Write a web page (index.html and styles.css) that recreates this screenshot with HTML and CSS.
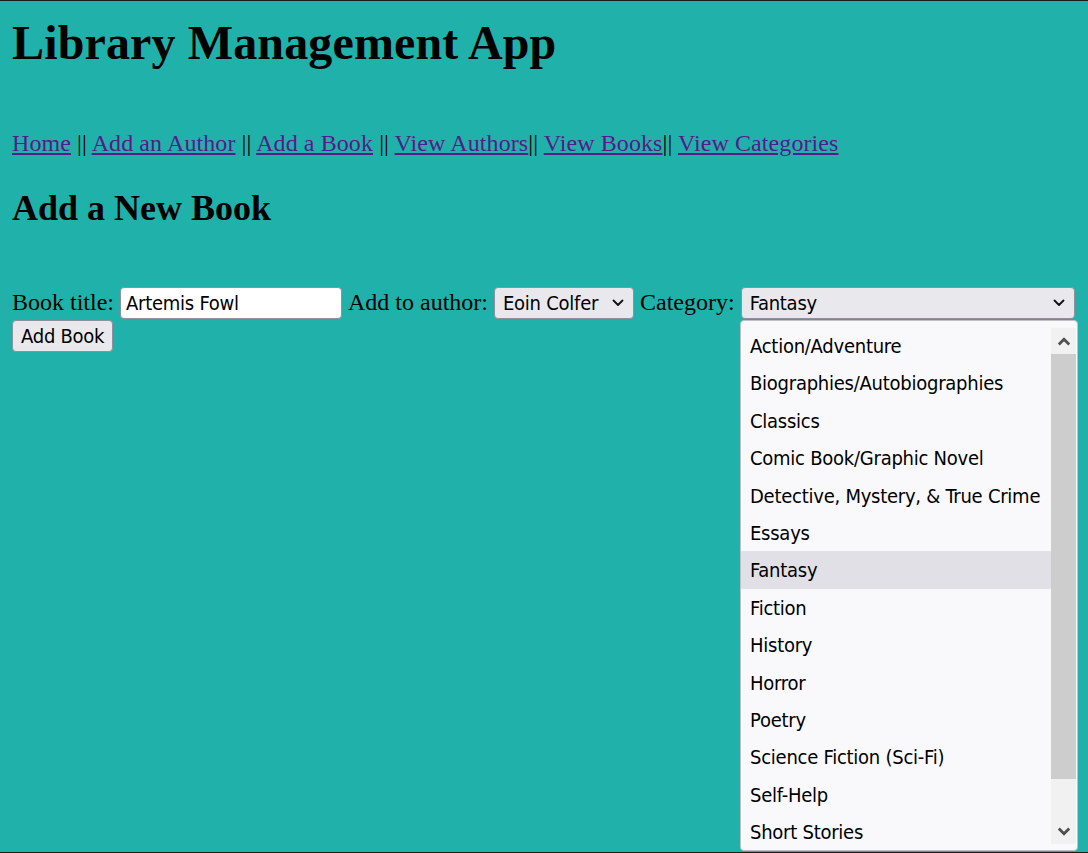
FILE: index.html
```html
<!DOCTYPE html>
<html lang="en">
<head>
<meta charset="utf-8">
<title>Library Management App</title>
<link rel="stylesheet" href="styles.css">
</head>
<body>
<h1 class="title">Library Management App</h1>
<nav class="nav">
  <a href="#">Home</a> || <a href="#">Add an Author</a> || <a href="#">Add a Book</a> || <a href="#">View Authors</a>|| <a href="#">View Books</a>|| <a href="#">View Categories</a>
</nav>
<h2 class="subtitle">Add a New Book</h2>
<form class="form">
  <div class="row">
    <label class="label">Book title:</label>
    <input class="input" type="text" value="Artemis Fowl">
    <label class="label">Add to author:</label>
    <div class="select select-author"><span>Eoin Colfer</span>
      <svg class="chev" width="12" height="8" viewBox="0 0 12 8"><path d="M1.5 1.5 L6 6 L10.5 1.5" fill="none" stroke="#111" stroke-width="1.8" stroke-linecap="round" stroke-linejoin="round"/></svg>
    </div>
    <label class="label">Category:</label>
    <div class="select select-cat"><span>Fantasy</span>
      <svg class="chev" width="12" height="8" viewBox="0 0 12 8"><path d="M1.5 1.5 L6 6 L10.5 1.5" fill="none" stroke="#111" stroke-width="1.8" stroke-linecap="round" stroke-linejoin="round"/></svg>
    </div>
  </div>
  <div class="row row2">
    <button class="btn" type="button">Add Book</button>
  </div>
</form>
<div class="popup">
  <ul class="options">
    <li>Action/Adventure</li>
    <li>Biographies/Autobiographies</li>
    <li>Classics</li>
    <li>Comic Book/Graphic Novel</li>
    <li>Detective, Mystery, &amp; True Crime</li>
    <li>Essays</li>
    <li class="selected">Fantasy</li>
    <li>Fiction</li>
    <li>History</li>
    <li>Horror</li>
    <li>Poetry</li>
    <li>Science Fiction (Sci-Fi)</li>
    <li>Self-Help</li>
    <li>Short Stories</li>
  </ul>
  <div class="scrollbar">
    <div class="sb-btn"><svg width="14" height="9" viewBox="0 0 14 9"><path d="M1.8 7.5 L7 2.3 L12.2 7.5" fill="none" stroke="#505050" stroke-width="2.8"/></svg></div>
    <div class="sb-thumb"></div>
    <div class="sb-track"></div>
    <div class="sb-btn"><svg width="14" height="9" viewBox="0 0 14 9"><path d="M1.8 1.5 L7 6.7 L12.2 1.5" fill="none" stroke="#505050" stroke-width="2.8"/></svg></div>
  </div>
</div>
<div class="frame-bottom"></div>
</body>
</html>
```
FILE: styles.css
```css
html {
  background: #20b2aa;
  border-top: 1px solid #1c1c1c;
}
body {
  margin: 0;
  padding: 14px 12px 0;
  box-sizing: border-box;
  min-height: calc(100vh - 1px);
  font-family: "Liberation Serif", "Times New Roman", serif;
  font-size: 24px;
  color: #000;
  position: relative;
}
.title {
  font-size: 48px;
  font-weight: 700;
  letter-spacing: 0.14px;
  margin: 0;
}
.nav {
  margin-top: 60px;
  letter-spacing: 0.09px;
}
.nav a {
  color: #551a8b;
}
.subtitle {
  font-size: 36px;
  font-weight: 700;
  margin: 30px 0 0;
}
.form {
  margin-top: 58px;
}
.row {
  display: flex;
  align-items: center;
  gap: 6px;
}
.row2 {
  margin-top: 1px;
}
.label {
  flex: none;
  white-space: nowrap;
  line-height: 1.15;
}
.input, .select, .btn, .popup {
  font-family: "DejaVu Sans Condensed", "DejaVu Sans", sans-serif;
  font-stretch: condensed;
  font-size: 20px;
  letter-spacing: -0.25px;
}
.input, .select, .btn {
  flex: none;
  color: #000;
  box-sizing: border-box;
  height: 32px;
  border-radius: 4px;
}
.input {
  width: 222px;
  border: 1px solid #8f8f9d;
  background: #fff;
  padding: 0 5px;
  outline: none;
  margin: 0;
}
.select {
  display: flex;
  align-items: center;
  justify-content: space-between;
  background: #e9e9ed;
  border: 1px solid #8f8f9d;
  padding: 0 9px 0 8px;
}
.select-author {
  width: 140px;
}
.select-cat {
  width: 334px;
}
.chev {
  display: block;
}
.popup {
  position: absolute;
  z-index: 10;
  left: 740px;
  top: 319px;
  width: 338px;
  height: 531px;
  box-sizing: border-box;
  border: 1px solid #bfbfc4;
  border-radius: 4px;
  background: #f9f9fb;
  display: grid;
  grid-template-columns: 1fr 26px;
  overflow: hidden;
  color: #000;
}
.options {
  list-style: none;
  margin: 0;
  padding: 6px 0 0;
  overflow: hidden;
}
.options li {
  box-sizing: border-box;
  height: 37.4px;
  line-height: 35.4px;
  padding: 2px 0 0 9px;
  white-space: nowrap;
}
.options li.selected {
  background: #e1e0e6;
}
.scrollbar {
  margin: 7px 1px 6px 0;
  display: flex;
  flex-direction: column;
  background: #f1f1f1;
}
.sb-btn {
  height: 26px;
  flex: none;
  display: flex;
  align-items: center;
  justify-content: center;
}
.sb-thumb {
  height: 425px;
  flex: none;
  background: #cdcdcd;
}
.sb-track {
  flex: 1;
}
.btn {
  background: #e9e9ed;
  border: 1px solid #8f8f9d;
  padding: 0 8px;
  white-space: nowrap;
  margin: 0;
}
.frame-bottom {
  position: fixed;
  left: 0;
  right: 0;
  bottom: 0;
  height: 1px;
  background: #1c1c1c;
}
```
